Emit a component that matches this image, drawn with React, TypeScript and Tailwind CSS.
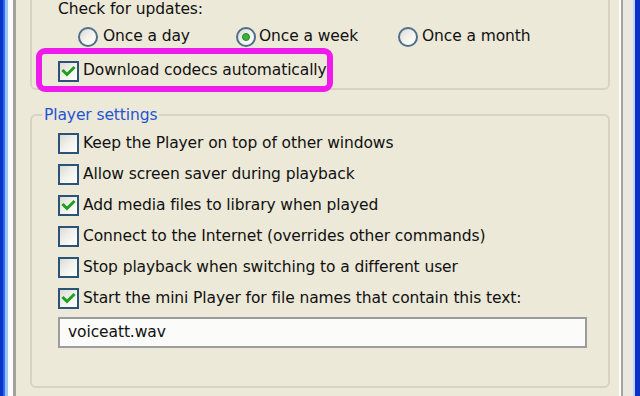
import React from "react";

function CheckBox({ checked }: { checked?: boolean }) {
  return (
    <div className="w-[21px] h-[21px] shrink-0 border-2 border-[#2b5277] bg-gradient-to-br from-[#dcdbd3] via-[#f2f1ec] to-[#ffffff] flex items-center justify-center">
      {checked && (
        <svg width="15" height="15" viewBox="0 0 15 15">
          <path d="M2.5 7 L6 10.5 L12.5 4" fill="none" stroke="#1f9e1f" strokeWidth="3" strokeLinecap="square" />
        </svg>
      )}
    </div>
  );
}

function Radio({ checked }: { checked?: boolean }) {
  return (
    <div className="w-[20px] h-[20px] shrink-0 rounded-full border-2 border-[#4f6e8c] bg-gradient-to-br from-[#d9d8d0] via-[#f3f3ee] to-[#ffffff] flex items-center justify-center">
      {checked && <div className="w-[8px] h-[8px] rounded-full bg-[#3fb03f] border border-[#1f8a1f]" />}
    </div>
  );
}

function CheckRow({ checked, label }: { checked?: boolean; label: string }) {
  return (
    <div className="h-[31px] flex items-center pl-[26px]">
      <CheckBox checked={checked} />
      <span className="ml-[4px] whitespace-nowrap">{label}</span>
    </div>
  );
}

export default function App() {
  return (
    <div className="relative w-[640px] h-[396px] overflow-hidden flex bg-[#ece9d8] text-[#111] font-['DejaVu_Sans',sans-serif] text-[15.5px] tracking-[-0.1px]">
      {/* left window frame */}
      <div className="flex shrink-0 h-full">
        <div className="w-[3px] bg-[#0a34c9]" />
        <div className="w-[2px] bg-[#2a6cf0]" />
        <div className="w-[3px] bg-[#9fc2f7]" />
        <div className="w-[5px] bg-[#fbfbfb]" />
        <div className="w-[3px] bg-[#a3a29d]" />
      </div>

      {/* content */}
      <div className="flex-1 pl-[14px] pr-[9px] flex flex-col">
        {/* top group */}
        <div className="h-[90px] border-2 border-t-0 border-[#d6d3c3] rounded-b-[6px] flex flex-col shrink-0">
          <div className="h-[20px] flex items-center pl-[26px] whitespace-nowrap">Check for updates:</div>
          <div className="mt-[2px] h-[30px] flex items-center pl-[46px]">
            <div className="w-[158px] flex items-center">
              <Radio />
              <span className="ml-[5px] whitespace-nowrap">Once a day</span>
            </div>
            <div className="w-[162px] flex items-center">
              <Radio checked />
              <span className="ml-[3px] whitespace-nowrap">Once a week</span>
            </div>
            <div className="flex items-center">
              <Radio />
              <span className="ml-[4px] whitespace-nowrap">Once a month</span>
            </div>
          </div>
          <div className="mt-[4px] h-[30px] flex items-center pl-[26px]">
            <CheckBox checked />
            <span className="ml-[4px] whitespace-nowrap">Download codecs automatically</span>
          </div>
        </div>

        {/* player settings group */}
        <div className="relative mt-[24px] border-2 border-[#d6d3c3] rounded-[6px] pt-[12px] pb-[38px] shrink-0">
          <span className="absolute -top-[12px] left-[10px] px-[2px] bg-[#ece9d8] text-[#1f55d2] whitespace-nowrap">
            Player settings
          </span>
          <CheckRow label="Keep the Player on top of other windows" />
          <CheckRow label="Allow screen saver during playback" />
          <CheckRow checked label="Add media files to library when played" />
          <CheckRow label="Connect to the Internet (overrides other commands)" />
          <CheckRow label="Stop playback when switching to a different user" />
          <CheckRow checked label="Start the mini Player for file names that contain this text:" />
          <div className="mt-[3px] ml-[26px] w-[529px] h-[31px] border-2 border-[#9a9c9e] bg-[#fbfbf9] flex items-center pl-[8px]">
            voiceatt.wav
          </div>
        </div>
      </div>

      {/* right window frame */}
      <div className="flex shrink-0 h-full">
        <div className="w-[2px] bg-[#fdfdfd]" />
        <div className="w-[2px] bg-[#a4a3a0]" />
        <div className="w-[10px] bg-[#e9e7e0]" />
        <div className="w-[2px] bg-[#bcd5f6]" />
        <div className="w-[5px] bg-[#0a31c4]" />
      </div>

      {/* magenta annotation */}
      <div className="absolute left-[36px] top-[48px] w-[297px] h-[44px] border-[6px] border-[#ef1bea] rounded-[9px]" />
    </div>
  );
}
